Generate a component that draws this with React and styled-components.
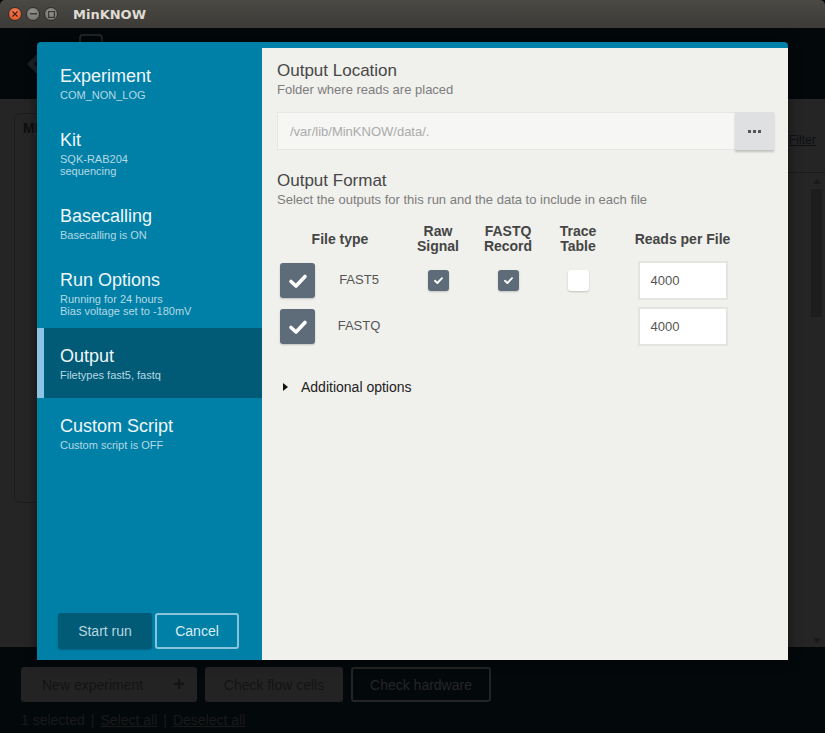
import styled, { createGlobalStyle } from 'styled-components'

const GlobalStyle = createGlobalStyle`
  html, body {
    margin: 0;
    padding: 0;
    background: #000;
  }
  body {
    font-family: 'Liberation Sans', Arial, sans-serif;
  }
  * {
    box-sizing: border-box;
  }
`

const Window = styled.div`
  position: relative;
  width: 825px;
  height: 733px;
  display: flex;
  flex-direction: column;
  overflow: hidden;
  background: #03080b;
`

const TitleBar = styled.div`
  height: 28px;
  flex-shrink: 0;
  display: flex;
  align-items: center;
  padding-left: 8px;
  background: linear-gradient(#4b4944, #3c3b37);
  border-radius: 5px 5px 0 0;
`

const WinButton = styled.span`
  width: 14px;
  height: 14px;
  margin-right: 4px;
  border-radius: 50%;
  display: flex;
  align-items: center;
  justify-content: center;
  border: 1px solid #2f2e2b;
  background: ${p =>
    p.$close
      ? 'radial-gradient(circle at 50% 35%, #f3845a, #dd4a1c)'
      : 'radial-gradient(circle at 50% 35%, #95938c, #6d6c66)'};
`

const WinTitle = styled.span`
  margin-left: 11px;
  font-family: 'DejaVu Sans', sans-serif;
  font-weight: bold;
  font-size: 13px;
  color: #dfdbd2;
`

const AppHeader = styled.div`
  height: 71px;
  flex-shrink: 0;
  background: #03080b;
  display: flex;
  align-items: center;
  padding-left: 27px;
  gap: 40px;
`

const AppBody = styled.div`
  flex: 1;
  background: #252525;
  display: flex;
`

const DimCard = styled.div`
  flex: 1;
  margin: 14px 0 0 14px;
  height: 390px;
  border: 1px solid #1c1c1c;
  border-radius: 6px;
  padding: 6px 8px;
  font-size: 14px;
  font-weight: bold;
  color: #0f0f0f;
`

const RightRail = styled.div`
  width: 37px;
  display: flex;
  flex-direction: column;
  align-items: flex-end;
`

const FilterLink = styled.span`
  margin-top: 34px;
  align-self: flex-start;
  padding-left: 1px;
  font-size: 12px;
  color: #0e1114;
  text-decoration: underline;
`

const RailDivider = styled.div`
  align-self: stretch;
  margin-top: 25px;
  border-top: 1px solid #1a1a1a;
`

const ScrollTrack = styled.div`
  width: 11px;
  margin: 6px 3px 0 0;
  flex: 1;
  display: flex;
  flex-direction: column;
  align-items: center;
  padding-bottom: 4px;
`

const ScrollThumb = styled.div`
  width: 11px;
  height: 128px;
  margin-top: 5px;
  background: #1d1d1d;
`

const Footer = styled.div`
  height: 86px;
  flex-shrink: 0;
  background: #03080b;
  padding: 20px 21px 0;
`

const FooterRow = styled.div`
  display: flex;
  gap: 8px;
`

const DimButton = styled.div`
  height: 35px;
  width: ${p => p.$w}px;
  border-radius: 3px;
  display: flex;
  align-items: center;
  justify-content: ${p => (p.$split ? 'space-between' : 'center')};
  padding: ${p => (p.$split ? '0 12px 0 21px' : '0')};
  background: ${p => (p.$outline ? 'transparent' : '#232323')};
  border: ${p => (p.$outline ? '2px solid #242424' : 'none')};
  font-size: 14px;
  color: ${p => (p.$outline ? '#262626' : '#131313')};
`

const SelectionLine = styled.div`
  margin-top: 10px;
  font-size: 14px;
  color: #1a1a1a;
  display: flex;
  gap: 6px;
`

const DimLink = styled.span`
  text-decoration: underline;
`

const Modal = styled.div`
  position: absolute;
  left: 37px;
  top: 42px;
  width: 751px;
  height: 618px;
  display: flex;
  background: #0080a7;
  border-radius: 4px 4px 0 0;
  box-shadow: 0 0 12px rgba(0, 0, 0, 0.5);
`

const Sidebar = styled.div`
  width: 225px;
  display: flex;
  flex-direction: column;
  padding-top: 9px;
`

const NavItem = styled.div`
  padding: ${p => (p.$active ? '17.5px 23px 17.5px 16px' : '14.5px 23px')};
  margin: ${p => (p.$active ? '-3px 0 3px' : '0')};
  background: ${p => (p.$active ? '#015b76' : 'transparent')};
  border-left: ${p => (p.$active ? '7px solid #8cc4e6' : 'none')};
`

const NavTitle = styled.div`
  font-size: 18px;
  line-height: 21px;
  color: #eef6f9;
`

const NavSub = styled.div`
  margin-top: 2px;
  font-size: 11px;
  line-height: 12px;
  color: #b6d9e5;
`

const SidebarActions = styled.div`
  margin-top: auto;
  display: flex;
  gap: 3px;
  padding: 0 0 11px 21px;
`

const ActionButton = styled.div`
  height: 36px;
  width: ${p => p.$w}px;
  border-radius: 3px;
  display: flex;
  align-items: center;
  justify-content: center;
  font-size: 14px;
  background: ${p => (p.$primary ? '#015b76' : 'transparent')};
  border: ${p => (p.$primary ? 'none' : '2px solid #89c3d9')};
  color: ${p => (p.$primary ? '#b7d5df' : '#dbedf3')};
  box-shadow: ${p => (p.$primary ? '0 1px 2px rgba(0,0,0,0.25)' : 'none')};
`

const Panel = styled.div`
  flex: 1;
  margin-top: 6px;
  background: #f0f0ec;
  padding: 13px 14px 0 15px;
`

const SectionTitle = styled.div`
  margin-top: ${p => p.$top || 0}px;
  font-size: 17px;
  line-height: 20px;
  color: #474747;
`

const SectionSub = styled.div`
  margin-top: 1px;
  font-size: 13px;
  line-height: 16px;
  color: #7d7d7d;
`

const PathRow = styled.div`
  margin-top: 14px;
  display: flex;
  height: 38px;
`

const PathInput = styled.div`
  flex: 1;
  display: flex;
  align-items: center;
  padding-left: 12px;
  background: #f6f6f4;
  border: 1px solid #e6e6e3;
  border-right: none;
  font-size: 13px;
  color: #ababab;
`

const BrowseButton = styled.div`
  width: 39px;
  display: flex;
  align-items: center;
  justify-content: center;
  gap: 2px;
  background: #dfe0e2;
  box-shadow: 0 2px 2px rgba(0, 0, 0, 0.2);
`

const Dot = styled.span`
  width: 3px;
  height: 3px;
  background: #555;
`

const FormatGrid = styled.div`
  margin-top: 16px;
  display: grid;
  grid-template-columns: 126px 70px 70px 70px 139px;
  row-gap: 7px;
  align-items: center;
`

const HeadCell = styled.div`
  min-height: 30px;
  display: flex;
  align-items: center;
  justify-content: center;
  text-align: center;
  font-size: 14px;
  line-height: 15px;
  font-weight: bold;
  color: #454545;
`

const Cell = styled.div`
  height: 39px;
  display: flex;
  align-items: center;
  justify-content: center;
`

const TypeCell = styled.div`
  height: 39px;
  display: flex;
  align-items: center;
  padding-left: 3px;
`

const TypeLabel = styled.span`
  flex: 1;
  text-align: center;
  margin-top: -3px;
  font-size: 13px;
  color: #555;
`

const Box = styled.div`
  width: ${p => p.$size}px;
  height: ${p => p.$size}px;
  border-radius: 3px;
  display: flex;
  align-items: center;
  justify-content: center;
  background: ${p => (p.$checked ? '#5e6b78' : '#ffffff')};
  box-shadow: 0 1px 2px rgba(0, 0, 0, 0.2);
`

const ReadsInput = styled.div`
  width: 90px;
  height: 39px;
  display: flex;
  align-items: center;
  padding-left: 11px;
  background: #fff;
  border: 2px solid #e4e4e1;
  font-size: 13px;
  color: #555;
`

const Disclosure = styled.div`
  margin-top: 33px;
  display: flex;
  align-items: center;
  gap: 13px;
  padding-left: 6px;
  font-size: 14px;
  color: #222;
`

function Check({ size }) {
  if (size > 30) {
    return (
      <svg width="20" height="16" viewBox="0 0 20 16">
        <polyline points="3,8.5 8,13 17,3.5" fill="none" stroke="#fff" strokeWidth="3.6" strokeLinecap="round" strokeLinejoin="round" />
      </svg>
    )
  }
  return (
    <svg width="11" height="9" viewBox="0 0 11 9">
      <polyline points="2,4.8 4.4,7 9,2.2" fill="none" stroke="#fff" strokeWidth="1.9" strokeLinecap="round" strokeLinejoin="round" />
    </svg>
  )
}

function CheckBox({ size, checked }) {
  return (
    <Box $size={size} $checked={checked}>
      {checked && <Check size={size} />}
    </Box>
  )
}

const navItems = [
  { title: 'Experiment', sub: ['COM_NON_LOG'] },
  { title: 'Kit', sub: ['SQK-RAB204', 'sequencing'] },
  { title: 'Basecalling', sub: ['Basecalling is ON'] },
  { title: 'Run Options', sub: ['Running for 24 hours', 'Bias voltage set to -180mV'] },
  { title: 'Output', sub: ['Filetypes fast5, fastq'], active: true },
  { title: 'Custom Script', sub: ['Custom script is OFF'] },
]

const fileRows = [
  { name: 'FAST5', raw: true, fastq: true, trace: false, reads: '4000', extras: true },
  { name: 'FASTQ', reads: '4000', extras: false },
]

export default function App() {
  return (
    <>
      <GlobalStyle />
      <Window>
        <TitleBar>
          <WinButton $close>
            <svg width="6" height="6" viewBox="0 0 6 6">
              <path d="M0.5 0.5 L5.5 5.5 M5.5 0.5 L0.5 5.5" stroke="#4a1a0a" strokeWidth="1.2" />
            </svg>
          </WinButton>
          <WinButton>
            <svg width="7" height="2" viewBox="0 0 7 2">
              <rect width="7" height="1.5" fill="#3a3936" />
            </svg>
          </WinButton>
          <WinButton>
            <svg width="7" height="7" viewBox="0 0 7 7">
              <rect x="0.6" y="0.6" width="5.8" height="5.8" fill="none" stroke="#3a3936" strokeWidth="1.2" />
            </svg>
          </WinButton>
          <WinTitle>MinKNOW</WinTitle>
        </TitleBar>

        <AppHeader>
          <svg width="12" height="22" viewBox="0 0 12 22">
            <path d="M11 0 L0 11 L11 22 L11 15 L7 11 L11 7 Z" fill="#1d2123" />
          </svg>
          <svg width="24" height="30" viewBox="0 0 24 30" style={{ alignSelf: 'flex-start', marginTop: 6 }}>
            <rect x="1" y="1" width="22" height="28" rx="3" fill="none" stroke="#2a2e31" strokeWidth="1.5" />
          </svg>
        </AppHeader>

        <AppBody>
          <DimCard>MI</DimCard>
          <RightRail>
            <FilterLink>Filter</FilterLink>
            <RailDivider />
            <ScrollTrack>
              <svg width="8" height="5" viewBox="0 0 8 5">
                <path d="M0 5 L4 0 L8 5 Z" fill="#1a1a1a" />
              </svg>
              <ScrollThumb />
              <div style={{ flex: 1 }} />
              <svg width="8" height="5" viewBox="0 0 8 5">
                <path d="M0 0 L4 5 L8 0 Z" fill="#1a1a1a" />
              </svg>
            </ScrollTrack>
          </RightRail>
        </AppBody>

        <Footer>
          <FooterRow>
            <DimButton $w={176} $split>
              <span>New experiment</span>
              <span style={{ fontSize: 20, fontWeight: 'bold' }}>+</span>
            </DimButton>
            <DimButton $w={138}>Check flow cells</DimButton>
            <DimButton $w={140} $outline>Check hardware</DimButton>
          </FooterRow>
          <SelectionLine>
            <span>1 selected</span>
            <span>|</span>
            <DimLink>Select all</DimLink>
            <span>|</span>
            <DimLink>Deselect all</DimLink>
          </SelectionLine>
        </Footer>

        <Modal>
          <Sidebar>
            {navItems.map(item => (
              <NavItem key={item.title} $active={item.active}>
                <NavTitle>{item.title}</NavTitle>
                <NavSub>
                  {item.sub.map(line => (
                    <div key={line}>{line}</div>
                  ))}
                </NavSub>
              </NavItem>
            ))}
            <SidebarActions>
              <ActionButton $primary $w={94}>Start run</ActionButton>
              <ActionButton $w={84}>Cancel</ActionButton>
            </SidebarActions>
          </Sidebar>

          <Panel>
            <SectionTitle>Output Location</SectionTitle>
            <SectionSub>Folder where reads are placed</SectionSub>
            <PathRow>
              <PathInput>/var/lib/MinKNOW/data/.</PathInput>
              <BrowseButton>
                <Dot />
                <Dot />
                <Dot />
              </BrowseButton>
            </PathRow>

            <SectionTitle $top={21}>Output Format</SectionTitle>
            <SectionSub>Select the outputs for this run and the data to include in each file</SectionSub>

            <FormatGrid>
              <HeadCell>File type</HeadCell>
              <HeadCell>Raw<br />Signal</HeadCell>
              <HeadCell>FASTQ<br />Record</HeadCell>
              <HeadCell>Trace<br />Table</HeadCell>
              <HeadCell>Reads per File</HeadCell>
              {fileRows.map(row => (
                <>
                  <TypeCell key={row.name + '-t'}>
                    <CheckBox size={35} checked />
                    <TypeLabel>{row.name}</TypeLabel>
                  </TypeCell>
                  <Cell key={row.name + '-r'}>{row.extras && <CheckBox size={21} checked={row.raw} />}</Cell>
                  <Cell key={row.name + '-q'}>{row.extras && <CheckBox size={21} checked={row.fastq} />}</Cell>
                  <Cell key={row.name + '-x'}>{row.extras && <CheckBox size={21} checked={row.trace} />}</Cell>
                  <Cell key={row.name + '-n'}>
                    <ReadsInput>{row.reads}</ReadsInput>
                  </Cell>
                </>
              ))}
            </FormatGrid>

            <Disclosure>
              <svg width="5" height="8" viewBox="0 0 5 8">
                <path d="M0 0 L5 4 L0 8 Z" fill="#111" />
              </svg>
              <span>Additional options</span>
            </Disclosure>
          </Panel>
        </Modal>
      </Window>
    </>
  )
}
